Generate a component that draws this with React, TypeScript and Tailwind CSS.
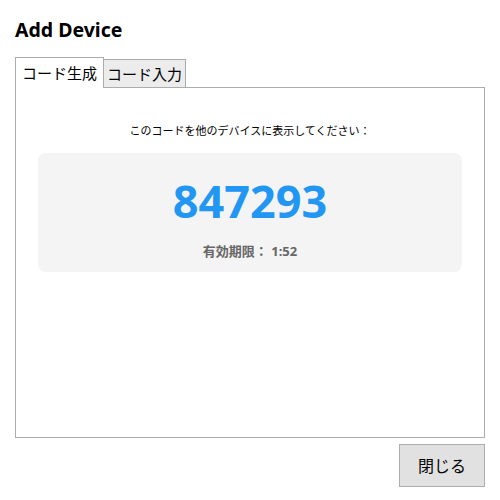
import React, { useState } from "react";

const jp = "font-['Noto_Sans','Noto_Sans_CJK_JP',sans-serif]";

const App = () => {
  const [tab, setTab] = useState("gen");
  const code = "847293";
  const remaining = "1:52";

  return (
    <div className={`w-[500px] h-[500px] bg-white px-[15px] pt-[16px] text-black ${jp}`}>
      <h1 className="text-[19.5px] font-bold leading-[28px]">Add Device</h1>

      {/* tabs */}
      <div className="mt-[13px] flex items-end h-[30px]">
        <button
          onClick={() => setTab("gen")}
          className={
            tab == "gen"
              ? "relative z-10 h-[31px] -mb-px px-[6px] bg-white border border-b-0 border-[#acacac] text-[15px] leading-[28px]"
              : "h-[28px] px-[3px] bg-[#ececec] border border-b-0 border-[#acacac] text-[15px] leading-[26px]"
          }
        >
          コード生成
        </button>
        <button
          onClick={() => setTab("input")}
          className={
            tab == "input"
              ? "relative z-10 h-[31px] -mb-px -ml-px px-[6px] bg-white border border-b-0 border-[#acacac] text-[15px] leading-[28px]"
              : "h-[28px] -ml-px px-[3px] bg-[#ececec] border border-b-0 border-[#acacac] text-[15px] leading-[26px]"
          }
        >
          コード入力
        </button>
      </div>

      <div className="h-[351px] border border-[#acacac] px-[22px] pt-[28px]">
        <p className="text-center text-[11px] leading-[30px]">
          このコードを他のデバイスに表示してください：
        </p>
        <div className="mt-[7px] h-[119px] rounded-[8px] bg-[#f4f4f4] flex flex-col items-center pt-[19px]">
          <div className="text-[45px] font-bold leading-[58px] text-[#2196f3]">{code}</div>
          <div className="mt-[12px] text-[13px] font-bold leading-[18px] text-[#666666]">
            有効期限： {remaining}
          </div>
        </div>
      </div>

      <div className="flex justify-end mt-[6px]">
        <button className="w-[86px] h-[43px] bg-[#e1e1e1] border border-[#adadad] text-[16px]">
          閉じる
        </button>
      </div>
    </div>
  );
};

export default App;
